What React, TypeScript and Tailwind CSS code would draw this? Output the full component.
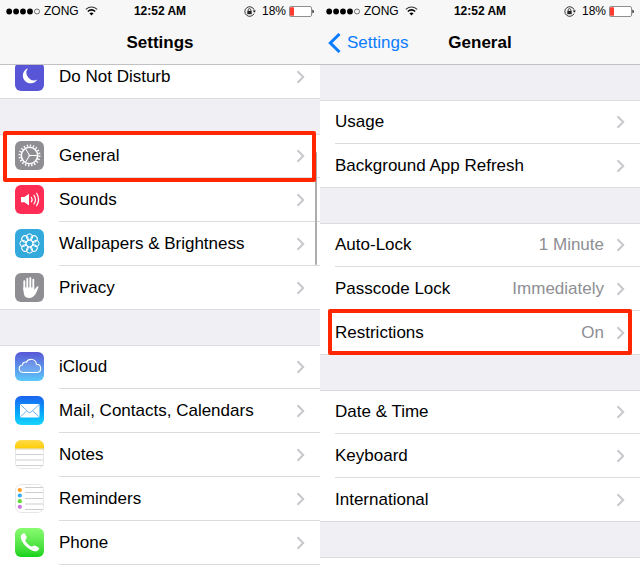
import React from "react";

type Item = {
  label: string;
  value?: string;
  icon?: React.ReactNode;
  highlight?: string;
};

const Tile: React.FC<{ bg: string; children: React.ReactNode }> = ({ bg, children }) => (
  <span className={`block size-[29px] shrink-0 overflow-hidden rounded-md ${bg}`}>
    <svg viewBox="0 0 29 29" className="block size-full" fill="none" aria-hidden="true">
      {children}
    </svg>
  </span>
);

const MoonIcon = () => (
  <Tile bg="bg-[#5856d6]">
    <path d="M13 6.2A7.8 7.8 0 1 0 22.3 17.6A7.6 7.6 0 0 1 13 6.2Z" fill="#fff" />
  </Tile>
);

const GearIcon = () => (
  <Tile bg="bg-[#8e8e93]">
    <g stroke="#fff">
      <circle cx="14.5" cy="14.5" r="8.2" strokeWidth="1.6" />
      <circle cx="14.5" cy="14.5" r="10" strokeWidth="2" strokeDasharray="1.4 1.742" />
      <path d="M14.5 14.5H22.5M14.5 14.5L10.5 7.6M14.5 14.5L10.5 21.4" strokeWidth="1" />
    </g>
    <circle cx="14.5" cy="14.5" r="1.1" fill="#fff" />
  </Tile>
);

const SoundIcon = () => (
  <Tile bg="bg-[#ff2d55]">
    <path d="M6 12h3.4L14 8.7v11.8L9.4 17.2H6Z" fill="#fff" />
    <g stroke="#fff" strokeWidth="1.2" strokeLinecap="round">
      <path d="M16.4 12.4q1.5 2.2 0 4.4" />
      <path d="M19 10.3q2.9 4.3 0 8.6" />
      <path d="M21.6 8.2q4 6.3 0 12.6" />
    </g>
  </Tile>
);

const petals = [0, 45, 90, 135, 180, 225, 270, 315];

const FlowerIcon = () => (
  <Tile bg="bg-[#34aadc]">
    <g stroke="#fff" strokeWidth="1">
      {petals.map((angle) => (
        <circle key={angle} cx="14.5" cy="8" r="3.1" transform={`rotate(${angle} 14.5 14.5)`} />
      ))}
      <circle cx="14.5" cy="14.5" r="3.4" />
    </g>
  </Tile>
);

const HandIcon = () => (
  <Tile bg="bg-[#8e8e93]">
    <g stroke="#fff" strokeWidth="1.9" strokeLinecap="round">
      <path d="M9.3 8.2V17M12.3 5.6V16M15.3 5V16M18.3 6.8V17" />
    </g>
    <path
      d="M8.4 14.5H19.2V17.2L21.7 13.8Q22.6 12.8 23.6 13.5C22.9 16 21.7 19.2 20.2 21.6Q17.9 25 14.2 25Q9.7 25 8.8 20.4Z"
      fill="#fff"
    />
  </Tile>
);

const CloudIcon = () => (
  <Tile bg="bg-linear-to-b from-[#5856d6] to-[#5ac8fa]">
    <path
      d="M8.2 20.5C5.8 20.5 4.2 18.8 4.2 16.7C4.2 14.7 5.6 13.2 7.4 13C7.4 10.8 9.4 9.4 11.3 10.2C12.3 8.2 14 7.2 16 7.2C19 7.2 21.3 9.4 21.4 12.3C24 12.4 25.7 14.1 25.7 16.4C25.7 18.8 24 20.5 21.5 20.5Z"
      fill="#fff"
      fillOpacity="0.12"
      stroke="#fff"
      strokeWidth="1.1"
    />
  </Tile>
);

const MailIcon = () => (
  <Tile bg="bg-linear-to-b from-[#1d62f0] to-[#1ad5fd]">
    <rect x="5" y="8" width="19.5" height="13.4" rx="1" fill="#fff" />
    <path d="M5.4 8.6L13.3 16Q14.7 17.2 16.1 16L24.1 8.6M5.4 20.8L11.8 14.8M24.1 20.8L17.7 14.8" stroke="#4aa0ee" strokeWidth="0.8" />
  </Tile>
);

const NotesIcon = () => (
  <Tile bg="bg-white">
    <defs>
      <linearGradient id="notes" x1="0" y1="0" x2="0" y2="1">
        <stop stopColor="#ffdb4c" />
        <stop offset="1" stopColor="#ffcd02" />
      </linearGradient>
    </defs>
    <path d="M0 14.5H29M0 20H29M0 25.5H29" stroke="#cfcfd2" />
    <rect x="0.5" y="0.5" width="28" height="28" rx="5.5" stroke="#e6e6e6" />
    <rect width="29" height="8.5" fill="url(#notes)" />
    <path d="M0 9H29" stroke="#d2c48c" strokeWidth="0.8" />
  </Tile>
);

const RemindersIcon = () => (
  <Tile bg="bg-white">
    <path d="M10 3.5H29M10 8.5H29M10 14.5H29M10 20H29M10 25.5H29" stroke="#cdcdcf" />
    <rect x="0.5" y="0.5" width="28" height="28" rx="5.5" stroke="#e6e6e6" />
    <circle cx="4.8" cy="6" r="2.1" fill="#ff9a1f" />
    <circle cx="4.8" cy="11.5" r="2.1" fill="#34aaf5" />
    <circle cx="4.8" cy="17.2" r="2.1" fill="#63da38" />
    <circle cx="4.8" cy="22.8" r="2.1" fill="#cc73e1" />
  </Tile>
);

const PhoneIcon = () => (
  <Tile bg="bg-linear-to-b from-[#87fc70] to-[#0bd318]">
    <path
      d="M8.4 5.3C9.3 5 9.9 5.4 10.3 6.3L11.5 8.8C11.9 9.8 11.7 10.5 10.9 11.2C10.2 11.9 10.2 12.6 10.8 13.5C12.2 15.6 13.8 17.2 15.9 18.3C16.8 18.8 17.4 18.7 18 18C18.7 17.3 19.4 17.2 20.3 17.7L23.2 19.2C24.2 19.8 24.5 20.5 24 21.3C23 22.9 21.3 23.6 19.4 23.2C13 21.8 7 15.5 5.8 9.8C5.4 7.7 6.5 5.9 8.4 5.3Z"
      fill="#fff"
    />
  </Tile>
);

const StatusBar = () => (
  <div className="flex h-[22px] items-center text-xs text-black">
    <div className="flex flex-1 items-center pl-[6px]">
      <svg className="mr-1 h-[7px] w-[34px]" viewBox="0 0 34 7" aria-hidden="true">
        <circle cx="3.2" cy="3.5" r="2.9" />
        <circle cx="10.1" cy="3.5" r="2.9" />
        <circle cx="17" cy="3.5" r="2.9" />
        <circle cx="24" cy="3.5" r="2.9" />
        <circle cx="31" cy="3.5" r="2.5" fill="none" stroke="#333" strokeWidth="0.7" />
      </svg>
      <span>ZONG</span>
      <svg className="ml-[6px] h-[10px] w-[13px]" viewBox="0 0 13 10" fill="none" stroke="#000" aria-hidden="true">
        <path d="M0.8 3.3Q6.5 -1.4 12.2 3.3" strokeWidth="1.1" stroke="#333" />
        <path d="M2.8 5.5Q6.5 2.3 10.2 5.5" strokeWidth="1.5" />
        <path d="M4.4 7.2Q6.5 5.6 8.6 7.2L6.5 9.4Z" fill="#000" stroke="none" />
      </svg>
    </div>
    <span className="font-bold">12:52 AM</span>
    <div className="flex flex-1 items-center justify-end pr-[6px]">
      <svg className="mr-[6px] h-[11px] w-3" viewBox="0 0 12 11" fill="none" stroke="#222" aria-hidden="true">
        <path d="M10 7.6A4.8 4.8 0 1 1 10.1 3.7" strokeWidth="0.9" />
        <path d="M8.6 4.4H12L10.3 6.7Z" fill="#222" stroke="none" />
        <rect x="3.3" y="4.9" width="4.4" height="3.3" fill="#222" stroke="none" />
        <path d="M4.2 5V3.9a1.3 1.3 0 0 1 2.6 0V5" strokeWidth="0.8" />
      </svg>
      <span>18%</span>
      <svg className="ml-[3px] h-[11px] w-[25px]" viewBox="0 0 25 11" fill="none" aria-hidden="true">
        <rect x="0.5" y="0.5" width="22" height="10" rx="1.5" fill="#fff" stroke="#8f8f8f" />
        <rect x="1" y="1.3" width="4" height="8.4" rx="0.6" fill="#ff3b30" />
        <path d="M23.3 3.5Q25 4 25 5.5T23.3 7.5Z" fill="#333" />
      </svg>
    </div>
  </div>
);

const Header: React.FC<{ title: string; back?: string }> = ({ title, back }) => (
  <header className="h-[65px] border-b border-[#c2c2c4] bg-[#f7f7f7]">
    <StatusBar />
    <div className="grid h-[42px] grid-cols-[1fr_auto_1fr] items-center text-[17px]">
      <div>
        {back && (
          <a href="#settings" className="flex items-center gap-[6px] pl-2 text-[#0a7cff]">
            <svg className="h-5 w-[13px]" viewBox="0 0 13 20" fill="none" stroke="currentColor" aria-hidden="true">
              <path d="M11.5 1L2.3 10L11.5 19" strokeWidth="3" />
            </svg>
            {back}
          </a>
        )}
      </div>
      <h1 className="font-bold text-black">{title}</h1>
    </div>
  </header>
);

const Chevron = () => (
  <svg className="h-[14px] w-[9px] shrink-0" viewBox="0 0 9 14" fill="none" aria-hidden="true">
    <path d="M1.5 1.3L7.2 7L1.5 12.7" stroke="#c7c7cc" strokeWidth="2" />
  </svg>
);

const Row: React.FC<{ item: Item; inset: boolean }> = ({ item, inset }) => (
  <li className={`group relative h-11 shrink-0 border-[#dcdce0] first:h-[43px] ${inset ? "" : "last:border-b"}`}>
    <a href={`#${item.label}`} className="flex h-full items-center pl-[15px] text-[17px] text-black">
      {item.icon && (
        <span className={`mr-[15px] pb-px group-first:pb-0.5 ${inset ? "" : "group-last:pb-0"}`}>{item.icon}</span>
      )}
      <span
        className={`flex h-full flex-1 items-center border-b border-[#dcdce0] pr-[15px] ${inset ? "" : "group-last:border-b-0"}`}
      >
        <span className="flex-1 whitespace-nowrap">{item.label}</span>
        {item.value && <span className="mr-3 text-[#8e8e93]">{item.value}</span>}
        <Chevron />
      </span>
    </a>
    {item.highlight && (
      <span className={`pointer-events-none absolute z-10 rounded-xs border-4 border-[#ff2600] ${item.highlight}`} />
    )}
  </li>
);

// inset keeps the last divider indented, for a group that goes on below the fold
const Group: React.FC<{ items: Item[]; inset?: boolean }> = ({ items, inset = false }) => (
  <ul className="bg-white">
    {items.map((item) => (
      <Row key={item.label} item={item} inset={inset} />
    ))}
  </ul>
);

const Gap = () => <div className="h-9 border-b border-[#dcdce0] bg-[#efeff4]" />;

const deviceItems: Item[] = [
  { label: "General", icon: <GearIcon />, highlight: "-top-1 -bottom-1 left-[3px] right-1" },
  { label: "Sounds", icon: <SoundIcon /> },
  { label: "Wallpapers & Brightness", icon: <FlowerIcon /> },
  { label: "Privacy", icon: <HandIcon /> },
];

const appItems: Item[] = [
  { label: "iCloud", icon: <CloudIcon /> },
  { label: "Mail, Contacts, Calendars", icon: <MailIcon /> },
  { label: "Notes", icon: <NotesIcon /> },
  { label: "Reminders", icon: <RemindersIcon /> },
  { label: "Phone", icon: <PhoneIcon /> },
];

const usageItems: Item[] = [{ label: "Usage" }, { label: "Background App Refresh" }];

const lockItems: Item[] = [
  { label: "Auto-Lock", value: "1 Minute" },
  { label: "Passcode Lock", value: "Immediately" },
  { label: "Restrictions", value: "On", highlight: "-top-0.5 -bottom-px inset-x-2" },
];

const localeItems: Item[] = [{ label: "Date & Time" }, { label: "Keyboard" }, { label: "International" }];

const SettingsScreen = () => (
  <section className="relative flex-1 bg-white">
    <Header title="Settings" />
    {/* Scrolled list, the first row is partly under the header */}
    <ul className="flex h-[34px] flex-col justify-end overflow-hidden">
      <li className="h-11 shrink-0 border-b border-[#dcdce0]">
        <a href="#dnd" className="flex h-full items-center pr-[15px] pl-[15px] text-[17px] text-black">
          <span className="mr-[15px]">
            <MoonIcon />
          </span>
          <span className="flex-1">Do Not Disturb</span>
          <Chevron />
        </a>
      </li>
    </ul>
    <Gap />
    <Group items={deviceItems} />
    <Gap />
    <Group items={appItems} inset />
    {/* Scroll indicator */}
    <span className="absolute top-[152px] right-[3px] h-[113px] w-0.5 rounded-full bg-[#adadad]" />
  </section>
);

const GeneralScreen = () => (
  <section className="flex-1 bg-white">
    <Header title="General" back="Settings" />
    <Gap />
    <Group items={usageItems} />
    <Gap />
    <Group items={lockItems} />
    <Gap />
    <Group items={localeItems} />
    <Gap />
  </section>
);

const App: React.FC = () => {
  return (
    <main className="flex bg-white pr-px font-['Liberation_Sans',Arial,sans-serif]">
      <SettingsScreen />
      <GeneralScreen />
    </main>
  );
};

export default App;
